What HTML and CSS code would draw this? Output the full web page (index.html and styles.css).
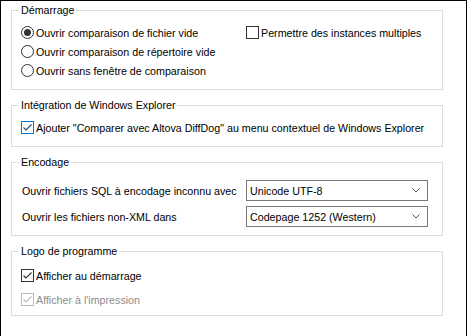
FILE: index.html
```html
<!DOCTYPE html>
<html lang="fr">
<head>
    <meta charset="UTF-8">
    <title>Options</title>
    <link rel="stylesheet" href="styles.css">
</head>
<body>

<div class="dialog">

    <fieldset class="group group-start">
        <legend>Démarrage</legend>
        <div class="start-grid">
            <div class="col">
                <label class="row"><span class="radio checked"></span>Ouvrir comparaison de fichier vide</label>
                <label class="row"><span class="radio"></span>Ouvrir comparaison de répertoire vide</label>
                <label class="row"><span class="radio"></span>Ouvrir sans fenêtre de comparaison</label>
            </div>
            <div class="col">
                <label class="row"><span class="check"></span>Permettre des instances multiples</label>
            </div>
        </div>
    </fieldset>

    <fieldset class="group group-explorer">
        <legend>Intégration de Windows Explorer</legend>
        <label class="row">
            <span class="check focused"><svg viewBox="0 0 11 11"><polyline points="1.5,5.5 4,8 9.5,2.5"/></svg></span>Ajouter "Comparer avec Altova DiffDog" au menu contextuel de Windows Explorer
        </label>
    </fieldset>

    <fieldset class="group group-encoding">
        <legend>Encodage</legend>
        <div class="enc-row">
            <span class="enc-label">Ouvrir fichiers SQL à encodage inconnu avec</span>
            <div class="select"><span>Unicode UTF-8</span><svg viewBox="0 0 8 5"><polyline points="0.5,0.5 4,4 7.5,0.5"/></svg></div>
        </div>
        <div class="enc-row">
            <span class="enc-label">Ouvrir les fichiers non-XML dans</span>
            <div class="select"><span>Codepage 1252 (Western)</span><svg viewBox="0 0 8 5"><polyline points="0.5,0.5 4,4 7.5,0.5"/></svg></div>
        </div>
    </fieldset>

    <fieldset class="group group-logo">
        <legend>Logo de programme</legend>
        <label class="row">
            <span class="check"><svg viewBox="0 0 11 11"><polyline points="1.5,5.5 4,8 9.5,2.5"/></svg></span>Afficher au démarrage
        </label>
        <label class="row disabled">
            <span class="check"><svg viewBox="0 0 11 11"><polyline points="1.5,5.5 4,8 9.5,2.5"/></svg></span>Afficher à l'impression
        </label>
    </fieldset>

</div>

</body>
</html>
```

FILE: styles.css
```css
body {
    margin: 0;
    background-color: #ffffff;
    font-family: "Liberation Sans", Arial, sans-serif;
    font-size: 10.7px;
    color: #000000;
}
.dialog {
    width: 465px;
    height: 334px;
    border: 1px solid #000000;
    padding-top: 2px;
    box-sizing: content-box;
}
.dialog .group:first-child {
    margin-top: 0;
}
.group {
    box-sizing: border-box;
    width: 432px;
    margin: 8px 0 0 10px;
    border: 1px solid #dcdcdc;
    padding: 6px 9px 9px 9px;
    min-width: 0;
}
.group legend {
    line-height: 14px;
    padding: 0 2px;
    margin-left: -2px;
}
.row {
    display: flex;
    align-items: center;
    height: 19px;
    white-space: nowrap;
}
.start-grid {
    display: grid;
    grid-template-columns: 225px 1fr;
}
/* radio buttons */
.radio {
    box-sizing: border-box;
    width: 13px;
    height: 13px;
    border: 1px solid #333333;
    border-radius: 50%;
    margin-right: 2px;
    display: flex;
    align-items: center;
    justify-content: center;
    flex: none;
}
.radio.checked::after {
    content: "";
    width: 7px;
    height: 7px;
    border-radius: 50%;
    background-color: #333333;
}
/* checkboxes */
.check {
    box-sizing: border-box;
    width: 13px;
    height: 13px;
    border: 1px solid #333333;
    margin-right: 2px;
    flex: none;
    display: flex;
}
.check svg {
    width: 11px;
    height: 11px;
    fill: none;
    stroke: #333333;
    stroke-width: 1.1;
}
.check.focused {
    border-color: #0078d7;
}
.check.focused svg {
    stroke: #1c4a86;
}
.row.disabled {
    color: #8d8d8d;
}
.row.disabled .check {
    border-color: #bcbcbc;
}
.row.disabled .check svg {
    stroke: #bcbcbc;
}
/* encoding */
.group-encoding {
    padding-top: 11px;
    padding-bottom: 8px;
}
.enc-row {
    display: flex;
    align-items: center;
    height: 21px;
}
.enc-row + .enc-row {
    margin-top: 5px;
}
.enc-label {
    width: 224px;
    padding-left: 1px;
}
.select {
    box-sizing: border-box;
    width: 182px;
    height: 21px;
    border: 1px solid #7a7a7a;
    display: flex;
    align-items: center;
    justify-content: space-between;
    padding: 0 7px 0 3px;
}
.select svg {
    width: 8px;
    height: 5px;
    fill: none;
    stroke: #555555;
    stroke-width: 1;
}
/* logo */
.group-logo {
    padding-top: 8px;
    padding-bottom: 6px;
}
.group-logo .row + .row {
    margin-top: 5px;
}
```
